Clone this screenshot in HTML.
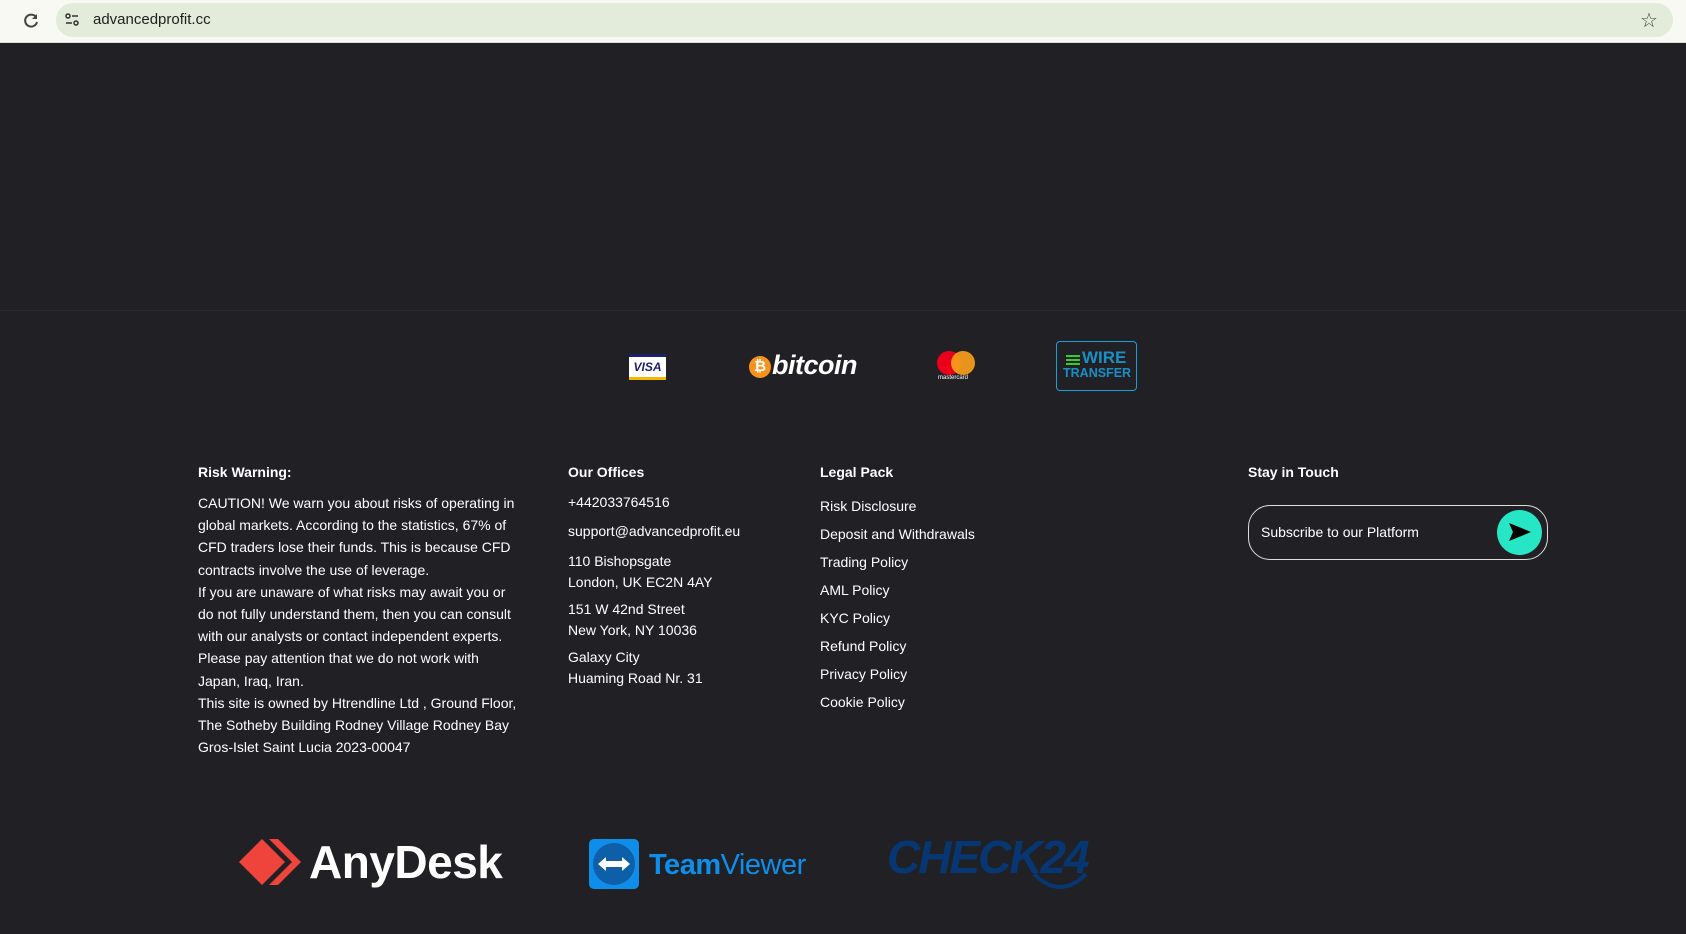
<!DOCTYPE html>
<html><head><meta charset="utf-8"><style>
*{margin:0;padding:0;box-sizing:border-box}
body{width:1686px;height:934px;background:#212025;font-family:"Liberation Sans",sans-serif;color:#fff;position:relative;overflow:hidden}
.bar{position:absolute;left:0;top:0;width:1686px;height:43px;background:#f7f9f2;border-bottom:1px solid #ddd}
.url{position:absolute;left:56px;top:3px;width:1617px;height:34px;border-radius:17px;background:#e3ebdb}
.url span{position:absolute;left:37px;top:8px;font-size:15px;color:#1f1f1f}
.ab{position:absolute;font-size:14px;line-height:22.2px;color:#fff;white-space:nowrap}
h4{position:absolute;font-size:14px;font-weight:bold;top:464px}
.a{position:absolute;font-size:14px}
</style></head><body>
<div class="bar">
<svg style="position:absolute;left:22px;top:12px" width="18" height="18" viewBox="0 0 18 18"><path d="M14 5A6 6 0 1 0 15 10" fill="none" stroke="#444" stroke-width="2"/><path d="M15 2v5h-5z" fill="#444"/></svg>
<div class="url"><svg style="position:absolute;left:8px;top:9px" width="16" height="16" viewBox="0 0 16 16"><circle cx="4" cy="4" r="2" fill="none" stroke="#333" stroke-width="1.5"/><path d="M8 4h6M2 11h6" stroke="#333" stroke-width="1.5"/><circle cx="12" cy="11" r="2" fill="none" stroke="#333" stroke-width="1.5"/></svg><span>advancedprofit.cc</span></div>
<div style="position:absolute;left:1640px;top:8px;font-size:20px;color:#444">☆</div>
</div>
<div style="position:absolute;left:0;top:310px;width:1686px;height:1px;background:#2a292e"></div>
<div style="position:absolute;left:629px;top:354px;width:37px;height:26px;background:#fff;border-top:3px solid #1a1f71;border-bottom:3px solid #f7b600;color:#1a1f71;font-weight:bold;font-style:italic;font-size:12px;text-align:center;line-height:20px">VISA</div>
<div style="position:absolute;left:749px;top:356px;width:22px;height:22px;border-radius:50%;background:#f7931a;color:#fff;font-weight:bold;font-size:15px;text-align:center;line-height:22px">₿</div>
<div style="position:absolute;left:772px;top:350px;font-size:27px;font-weight:bold;font-style:italic;color:#fff;letter-spacing:-0.5px">bitcoin</div>
<div style="position:absolute;left:937px;top:351px;width:24px;height:24px;border-radius:50%;background:#eb001b"></div>
<div style="position:absolute;left:951px;top:351px;width:24px;height:24px;border-radius:50%;background:#f79e1b;opacity:.92"></div>
<div style="position:absolute;left:938px;top:375px;font-size:6px;color:#fff">mastercard</div>
<div style="position:absolute;left:1056px;top:341px;width:81px;height:50px;border:1.5px solid #1aa0d8;border-radius:4px"></div>
<div style="position:absolute;left:1066px;top:355px;width:14px;height:2px;background:#3c3;box-shadow:0 4px 0 #3c3,0 8px 0 #3c3"></div>
<div style="position:absolute;left:1082px;top:351px;font-size:17px;font-weight:bold;color:#1a8fc4;line-height:14px">WIRE</div>
<div style="position:absolute;left:1063px;top:367px;font-size:12.5px;font-weight:bold;color:#1a8fc4;line-height:13px">TRANSFER</div>

<h4 style="left:198px">Risk Warning:</h4>
<div class="ab" style="left:198px;top:492px">CAUTION! We warn you about risks of operating in<br>global markets. According to the statistics, 67% of<br>CFD traders lose their funds. This is because CFD<br>contracts involve the use of leverage.<br>If you are unaware of what risks may await you or<br>do not fully understand them, then you can consult<br>with our analysts or contact independent experts.<br>Please pay attention that we do not work with<br>Japan, Iraq, Iran.<br>This site is owned by Htrendline Ltd , Ground Floor,<br>The Sotheby Building Rodney Village Rodney Bay<br>Gros-Islet Saint Lucia 2023-00047</div>

<h4 style="left:568px">Our Offices</h4>
<div class="a" style="left:568px;top:494px">+442033764516</div>
<div class="a" style="left:568px;top:523px">support@advancedprofit.eu</div>
<div class="a" style="left:568px;top:551px;line-height:21px">110 Bishopsgate<br>London, UK EC2N 4AY</div>
<div class="a" style="left:568px;top:599px;line-height:21px">151 W 42nd Street<br>New York, NY 10036</div>
<div class="a" style="left:568px;top:647px;line-height:21px">Galaxy City<br>Huaming Road Nr. 31</div>

<h4 style="left:820px">Legal Pack</h4>
<div class="a" style="left:820px;top:492px;line-height:28px">Risk Disclosure<br>Deposit and Withdrawals<br>Trading Policy<br>AML Policy<br>KYC Policy<br>Refund Policy<br>Privacy Policy<br>Cookie Policy</div>

<h4 style="left:1248px">Stay in Touch</h4>
<div style="position:absolute;left:1248px;top:505px;width:300px;height:55px;border:1.5px solid #ddd;border-radius:22px"></div>
<div class="a" style="left:1261px;top:524px">Subscribe to our Platform</div>
<div style="position:absolute;left:1497px;top:510px;width:45px;height:45px;border-radius:50%;background:#26e6c6"></div>
<svg style="position:absolute;left:1508px;top:522px" width="24" height="20" viewBox="0 0 24 20"><path d="M1 1L23 10L1 19L5 10Z" fill="#000"/></svg>

<svg style="position:absolute;left:239px;top:839px" width="65" height="46" viewBox="0 0 65 46"><path d="M23 0L46 23L23 46L0 23Z" fill="#ef443b"/><path d="M34 0L43 0L66 23L43 46L34 46L57 23Z" fill="#ef443b" transform="translate(-4 0)"/></svg>
<div style="position:absolute;left:309px;top:834px;font-size:46px;font-weight:bold;color:#fff;line-height:56px;letter-spacing:-0.5px">AnyDesk</div>
<div style="position:absolute;left:589px;top:839px;width:50px;height:50px;border-radius:5px;background:#0e8ee9"></div>
<div style="position:absolute;left:593px;top:843px;width:42px;height:42px;border-radius:50%;background:#0d5fa8"></div>
<svg style="position:absolute;left:596px;top:856px" width="36" height="16" viewBox="0 0 36 16"><path d="M2 8L10 1V5H26V1L34 8L26 15V11H10V15Z" fill="#fff"/></svg>
<div style="position:absolute;left:649px;top:847px;font-size:29px;color:#0e8ee9;line-height:36px;letter-spacing:-0.5px"><b>Team</b>Viewer</div>
<div style="position:absolute;left:887px;top:832px;font-size:46px;font-weight:bold;font-style:italic;color:#063773;line-height:50px;letter-spacing:-2px">CHECK24</div>
<svg style="position:absolute;left:1030px;top:870px" width="60" height="22" viewBox="0 0 60 22"><path d="M4 4Q30 30 56 4" fill="none" stroke="#063773" stroke-width="4"/></svg>
</body></html>
